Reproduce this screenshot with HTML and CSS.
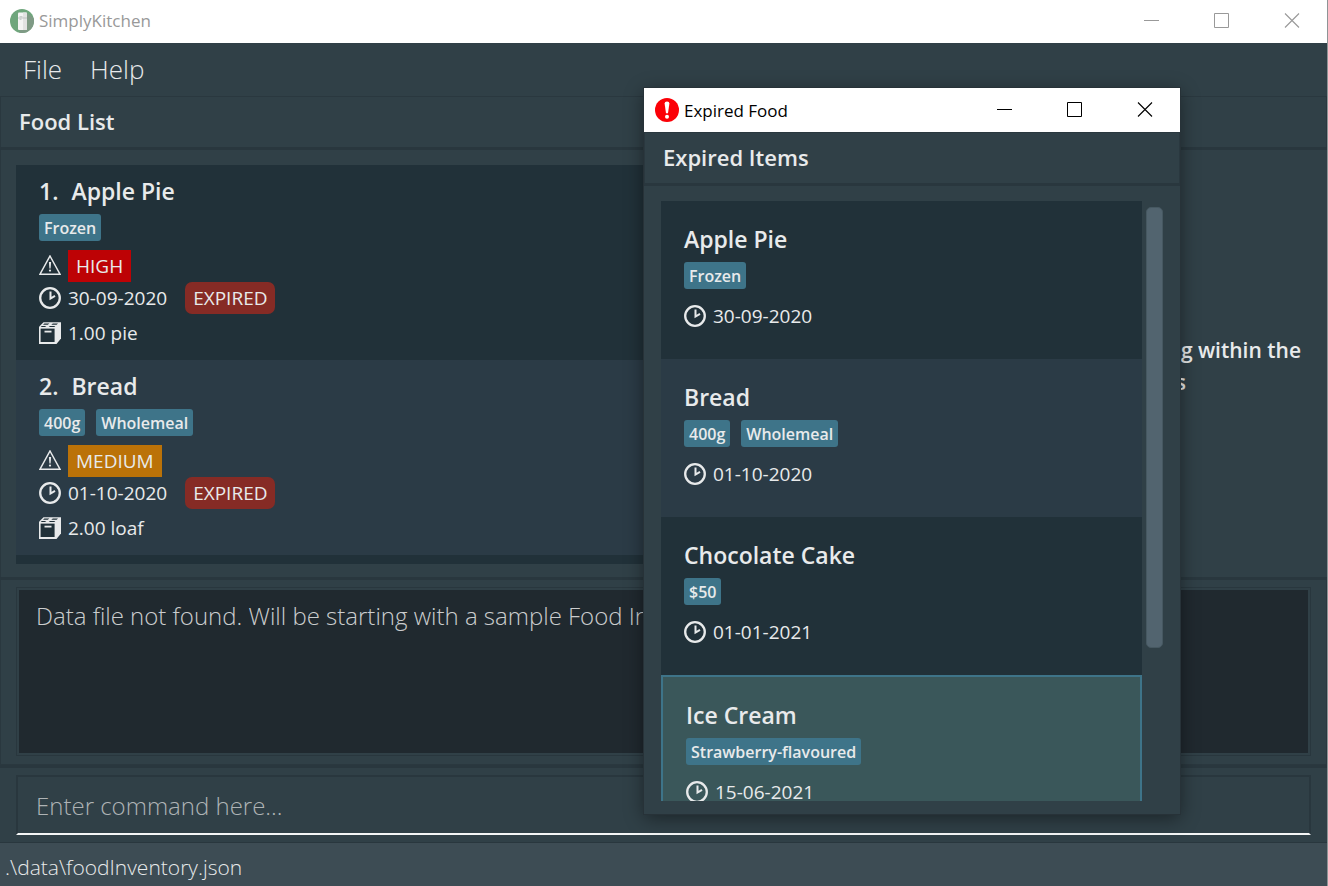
FILE: index.html
```html
<!DOCTYPE html>
<html lang="en">
<head>
<meta charset="utf-8">
<title>SimplyKitchen</title>
<link rel="stylesheet" href="styles.css">
</head>
<body>
<svg class="defs" aria-hidden="true">
  <symbol id="clock" viewBox="0 0 22 22"><circle cx="11" cy="11" r="9.8" fill="none" stroke="currentColor" stroke-width="2.300"/><path d="M11.500 4.500v7l4.500-2.600" fill="none" stroke="currentColor" stroke-width="2"/></symbol>
  <symbol id="warn" viewBox="0 0 22 22"><path d="M11 1 21 19.200H1Z" fill="none" stroke="currentColor" stroke-width="1.5"/><path d="M9.900 7h2.200l-.5 6.500h-1.200Z" fill="currentColor"/><circle cx="11" cy="15.600" r="1.100" fill="currentColor"/></symbol>
  <symbol id="box" viewBox="0 0 22 22"><path d="M4.500.3H22V16.500L17.500 22H0V4.800Z" fill="currentColor"/><path class="hole" d="M1.600 6.600h14v13.400H1.600Z"/><path d="M5.500 8.700h7v1.800h-7Z" fill="currentColor"/><path class="cut" d="M5.400 1.600h5L8.800 2.800H4ZM13.800 1.600h5.200l-1.400 1.200h-5.300ZM2.800 3.900h4.600L6 5H1.700ZM11 3.900h5.400L15.200 5H9.700Z"/></symbol>
  <symbol id="min" viewBox="0 0 16 16"><path d="M0 7.500h15" stroke="currentColor"/></symbol>
  <symbol id="max" viewBox="0 0 16 16"><path d="M.5.5h14v14H.5Z" fill="none" stroke="currentColor"/></symbol>
  <symbol id="close" viewBox="0 0 16 16"><path d="m1 .5 14 14m0-14-14 14" stroke="currentColor" stroke-width="1.100"/></symbol>
</svg>

<div class="app">
  <header class="titlebar inactive">
    <svg class="logo" viewBox="0 0 24 24"><defs><clipPath id="disc"><circle cx="12" cy="12" r="12"/></clipPath></defs><g clip-path="url(#disc)"><path d="M0 0h24v24H0Z" fill="#6fa67c"/><path d="M16 3.500 24 9v15H9Z" fill="#7f9a85"/></g><rect x="8" y="3.500" width="9" height="17.500" rx="1" fill="#f4f4f4"/><path d="M13 3.500h3.200q.8 0 .8.800v15.900q0 .8-.8.800H13Z" fill="#e2e2e2"/><path d="M8 9h9" stroke="#b9bdbb" stroke-width=".8"/><path d="M9.500 7.800h3M9.500 10.200h2" stroke="#aab0ad" stroke-width=".8"/></svg>
    <span class="caption">SimplyKitchen</span>
    <button class="winbtn" aria-label="Minimize"><svg><use href="#min"/></svg></button>
    <button class="winbtn" aria-label="Maximize"><svg><use href="#max"/></svg></button>
    <button class="winbtn" aria-label="Close"><svg><use href="#close"/></svg></button>
  </header>
  <nav class="menu"><button>File</button><button>Help</button></nav>
  <h1 class="heading">Food List</h1>
  <main class="content">
    <ul class="foods">
      <li class="food">
        <h2 class="name"><span>1.</span><span>Apple Pie</span></h2>
        <div class="tags"><span class="tag">Frozen</span></div>
        <div class="row"><svg class="icon"><use href="#warn"/></svg><span class="badge high">HIGH</span></div>
        <div class="row"><svg class="icon"><use href="#clock"/></svg><span>30-09-2020</span><span class="badge expired">EXPIRED</span></div>
        <div class="row quantity"><svg class="icon"><use href="#box"/></svg><span>1.00 pie</span></div>
      </li>
      <li class="food">
        <h2 class="name"><span>2.</span><span>Bread</span></h2>
        <div class="tags"><span class="tag">400g</span><span class="tag">Wholemeal</span></div>
        <div class="row"><svg class="icon"><use href="#warn"/></svg><span class="badge medium">MEDIUM</span></div>
        <div class="row"><svg class="icon"><use href="#clock"/></svg><span>01-10-2020</span><span class="badge expired">EXPIRED</span></div>
        <div class="row quantity"><svg class="icon"><use href="#box"/></svg><span>2.00 loaf</span></div>
      </li>
      <li class="food"></li>
    </ul>
    <div class="side"><p>g within the</p><p class="tail">s</p></div>
  </main>
  <section class="result"><textarea readonly aria-label="Result">Data file not found. Will be starting with a sample Food Inventory</textarea></section>
  <section class="command"><input type="text" aria-label="Command" placeholder="Enter command here..."></section>
  <footer class="status">.\data\foodInventory.json</footer>
</div>

<div class="popup" role="dialog" aria-label="Expired Food">
  <header class="titlebar">
    <svg class="logo" viewBox="0 0 24 24"><circle cx="12" cy="12" r="12" fill="#fb0007"/><path d="M9.600 5.500q0-2 2.400-2t2.400 2L13 15.300h-2Z" fill="#fff"/><circle cx="12" cy="18.800" r="2" fill="#fff"/></svg>
    <span class="caption">Expired Food</span>
    <button class="winbtn" aria-label="Minimize"><svg><use href="#min"/></svg></button>
    <button class="winbtn" aria-label="Maximize"><svg><use href="#max"/></svg></button>
    <button class="winbtn" aria-label="Close"><svg><use href="#close"/></svg></button>
  </header>
  <h2 class="heading">Expired Items</h2>
  <div class="expired-pane">
    <ul class="expired-list">
      <li class="item"><h3 class="name">Apple Pie</h3><div class="tags"><span class="tag">Frozen</span></div><div class="row"><svg class="icon"><use href="#clock"/></svg><span>30-09-2020</span></div></li>
      <li class="item"><h3 class="name">Bread</h3><div class="tags"><span class="tag">400g</span><span class="tag">Wholemeal</span></div><div class="row"><svg class="icon"><use href="#clock"/></svg><span>01-10-2020</span></div></li>
      <li class="item"><h3 class="name">Chocolate Cake</h3><div class="tags"><span class="tag">$50</span></div><div class="row"><svg class="icon"><use href="#clock"/></svg><span>01-01-2021</span></div></li>
      <li class="item selected"><h3 class="name">Ice Cream</h3><div class="tags"><span class="tag">Strawberry-flavoured</span></div><div class="row"><svg class="icon"><use href="#clock"/></svg><span>15-06-2021</span></div></li>
    </ul>
    <div class="scrollbar"><div class="thumb"></div></div>
  </div>
</div>
</body>
</html>
```

FILE: styles.css
```css
* { box-sizing: border-box; }
body, h1, h2, h3, p, ul { margin: 0; padding: 0; }
ul { list-style: none; }
body {
  background: #304047;
  color: #e8eaeb;
  font-family: "Open Sans", "Noto Sans", sans-serif;
  font-size: 19px;
}
button, input, textarea { font: inherit; color: inherit; border: 0; background: none; padding: 0; margin: 0; }
.defs { position: absolute; width: 0; height: 0; }

.app {
  height: 100vh;
  display: flex;
  flex-direction: column;
  border-right: 1px solid #8e9496;
  overflow: hidden;
}
.titlebar { display: flex; align-items: center; height: 44px; flex: none; background: #fff; color: #000; padding: 0 0 0 11px; }
.titlebar.inactive { height: 43px; color: #999; padding: 0 0 2px 10px; }
.logo { width: 24px; height: 24px; margin-right: 5px; flex: none; }
.caption { flex: 1; font-size: 17px; }
.winbtn { width: 70px; height: 100%; display: grid; place-items: center; }
.winbtn svg { width: 16px; height: 16px; }

.menu { display: flex; gap: 28px; height: 53px; flex: none; padding: 0 23px 2px; font-size: 26px; font-weight: 300; }
.heading {
  flex: none;
  height: 54px;
  padding: 0 18px 4px;
  line-height: 48px;
  font-size: 22px;
  font-weight: 600;
  border: 1px solid #2a383f;
  border-bottom: 3px solid #29373e;
}
.content { flex: 1; min-height: 0; display: grid; grid-template-columns: 1fr 1fr; padding: 15px 15px 13px; border-left: 1px solid #2a383f; }
.foods { overflow: hidden; }
.food { height: 195px; padding: 10px 23px 0; background: #213139; }
.food:nth-child(even), .item:nth-child(even) { background: #2b3b46; }
.name { font-size: 23px; line-height: 32px; font-weight: 600; display: flex; gap: 13px; }
.tags { display: flex; gap: 11px; margin: 7px 0 9px; }
.tag { height: 27px; line-height: 28px; padding: 0 5px; border-radius: 3px; background: #3e7489; font-size: 16px; font-weight: 600; }
.row { display: flex; align-items: center; height: 32px; line-height: 20px; gap: 7px; }
.icon { width: 22px; height: 22px; flex: none; }
.hole, .cut { fill: #213139; }
.quantity { margin-top: 3px; }
.badge { height: 32px; line-height: 32px; padding: 0 8px; }
.high { background: #bd0205; }
.medium { background: #bb7208; }
.expired { background: #862b25; border-radius: 7px; margin-left: 11px; }
.side { display: flex; flex-direction: column; justify-content: center; text-align: right; padding: 2px 11px 0 0; font-size: 21px; line-height: 32px; font-weight: 600; }
.tail { padding-right: 115px; }

.result { flex: none; height: 188px; padding: 8px 16px 9px; border: 1px solid #2a383f; border-top: 3px solid #29373e; }
.result textarea {
  display: block;
  width: 100%;
  height: 100%;
  resize: none;
  outline: 0;
  overflow: hidden;
  padding: 7px 17px;
  border: 2px solid #304047;
  box-shadow: 0 0 0 1px #29373e;
  background: #20292f;
  color: #cbcdce;
  font-size: 24px;
  line-height: 38px;
  font-weight: 300;
}
.command { flex: none; height: 78px; padding: 7px 16px; border-top: 3px solid #29373e; border-bottom: 1px solid #29373e; }
.command input { display: block; width: 100%; height: 60px; padding: 0 18px; border: 2px solid #29373e; border-bottom: 2px solid #f4f6f6; font-size: 24px; font-weight: 300; }
.command input::placeholder { color: #aeb3b5; opacity: 1; }
.status { flex: none; height: 43px; padding-left: 5px; background: #3d4c54; font-size: 21px; line-height: 48px; font-weight: 300; }

.popup {
  position: absolute;
  left: 644px;
  right: 148px;
  top: 88px;
  bottom: 72px;
  display: flex;
  flex-direction: column;
  background: #304047;
  box-shadow: 0 0 0 1px #273238, 0 4px 18px rgba(0, 0, 0, .45);
}
.expired-pane { flex: 1; min-height: 0; display: grid; grid-template-columns: 1fr 17px; gap: 4px; padding: 15px 17px 13px; }
.expired-list { overflow: hidden; }
.item { height: 158px; padding: 22px 23px 0; background: #213139; }
.item .tags { margin: 7px 0 11px; }
.item.selected { background: #3a575a; border: 2px solid #3e7489; }
.scrollbar { padding: 6px 0; }
.thumb { height: 75%; border-radius: 5px; background: #52646f; border: 1px solid #465861; }
```
